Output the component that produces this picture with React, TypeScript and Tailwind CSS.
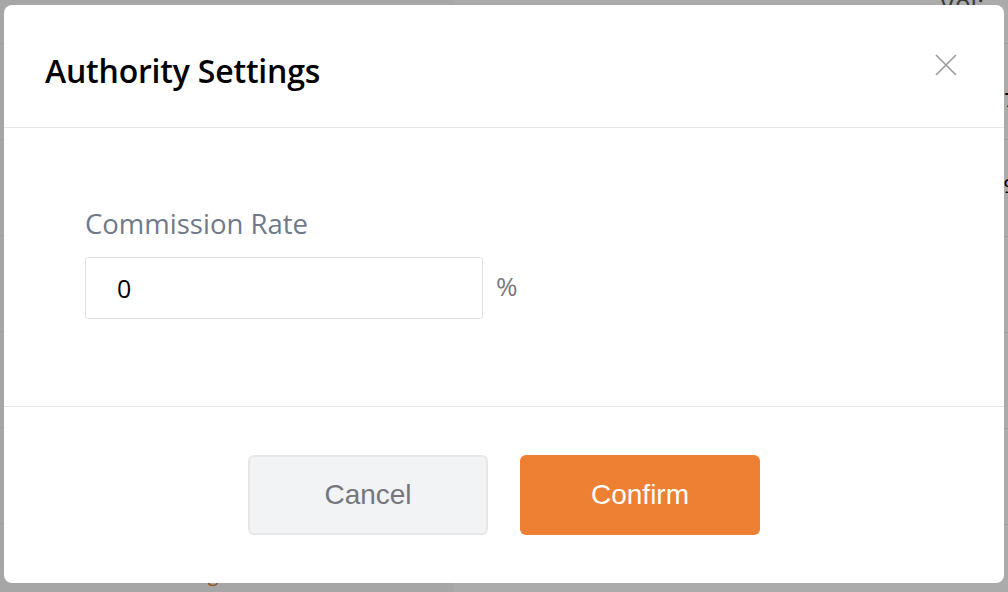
import React, { useState } from 'react';

const rows = [0, 1, 2, 3, 4, 5];

const CloseIcon = () => (
  <svg width="22" height="22" viewBox="0 0 22 22" fill="none">
    <path d="M1 1L21 21M21 1L1 21" stroke="#9a9a9a" strokeWidth="1.6" />
  </svg>
);

export default function App() {
  const [rate, setRate] = useState('0');

  return (
    <div className="relative w-[1008px] h-[592px] overflow-hidden bg-white font-['Open_Sans',sans-serif]">
      {/* page behind the dialog */}
      <div className="flex h-full">
        <div className="w-[453px] bg-[#f8f8f8] flex flex-col">
          <div className="h-[44px] shrink-0 border-b border-[#ebebeb]" />
          {rows.map((r) => (
            <div key={r} className="h-[96px] shrink-0 border-b border-[#ebebeb] px-6 flex items-start">
              {r === 5 && <span className="ml-[130px] mt-[36px] text-[20px] leading-[28px] text-[#e07a2a]">Settings</span>}
            </div>
          ))}
        </div>
        <div className="flex-1 flex flex-col">
          <div className="h-[44px] shrink-0 border-b border-[#ebebeb] flex justify-end pr-[24px]">
            <span className="text-[26px] leading-none mt-[-10px] text-[#555]">Vol:</span>
          </div>
          <div className="h-[96px] shrink-0 border-b border-[#ebebeb] flex items-center justify-end mr-[-8px]">
            <span className="text-[20px] font-semibold text-black mt-[16px]">7</span>
          </div>
          <div className="h-[97px] shrink-0 border-b border-[#ebebeb] flex items-center justify-end mr-[-7px]">
            <span className="text-[20px] text-black mt-[-4px]">9</span>
          </div>
          {rows.slice(0, 4).map((r) => (
            <div key={r} className="h-[96px] shrink-0 border-b border-[#ebebeb]" />
          ))}
        </div>
      </div>

      {/* backdrop */}
      <div className="absolute inset-0 bg-black/[0.33]" />

      {/* dialog */}
      <div className="absolute left-[4px] top-[5px] w-[1000px] h-[578px] bg-white rounded-[8px] flex flex-col">
        <div className="h-[123px] shrink-0 flex items-center justify-between pl-[41px] pr-[47px] border-b border-[#e6e6e6]">
          <h2 className="text-[32px] font-semibold text-black tracking-[-0.2px] mt-[10px]">Authority Settings</h2>
          <button className="mt-[-2px]">
            <CloseIcon />
          </button>
        </div>

        <div className="flex-1 pl-[81px] pt-[79px]">
          <label className="block text-[27.5px] leading-[34px] text-[#6f7a89]">Commission Rate</label>
          <div className="flex items-center gap-[13px] mt-[16px]">
            <input
              value={rate}
              onChange={(e) => setRate(e.target.value)}
              className="w-[398px] h-[62px] border border-[#e2e2e2] rounded-[3px] pl-[31px] text-[25px] text-black outline-none"
            />
            <span className="text-[26px] text-[#7a7a7a] mt-[-4px]">%</span>
          </div>
        </div>

        <div className="h-[177px] shrink-0 border-t border-[#e6e6e6] flex items-center justify-center gap-[32px] font-['Liberation_Sans',Arial,sans-serif]">
          <button className="w-[240px] h-[80px] rounded-[6px] bg-[#f2f3f5] border-2 border-[#e6e7e9] text-[28px] text-[#75777c]">
            Cancel
          </button>
          <button className="w-[240px] h-[80px] rounded-[6px] bg-[#ed8032] text-[28px] text-white">
            Confirm
          </button>
        </div>
      </div>
    </div>
  );
}
